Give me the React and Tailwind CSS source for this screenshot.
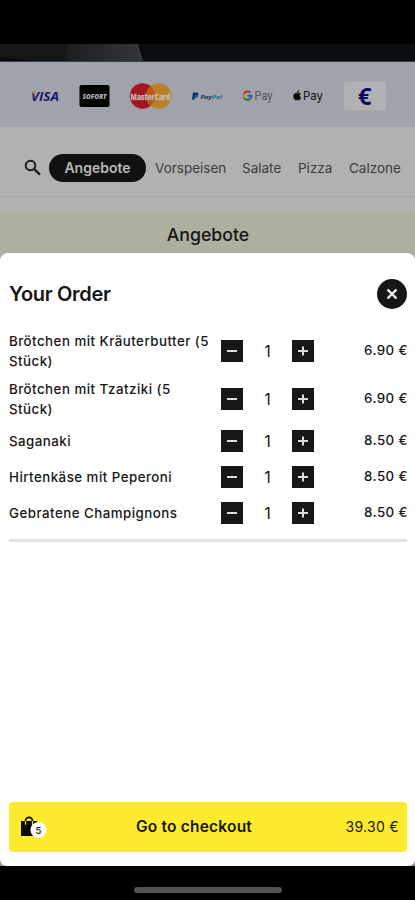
import React from 'react';

const items = [
  { name: 'Brötchen mit Kräuterbutter (5 Stück)', price: '6.90 €', height: 'h-12' },
  { name: 'Brötchen mit Tzatziki (5 Stück)', price: '6.90 €', height: 'h-12' },
  { name: 'Saganaki', price: '8.50 €', height: 'h-9' },
  { name: 'Hirtenkäse mit Peperoni', price: '8.50 €', height: 'h-9' },
  { name: 'Gebratene Champignons', price: '8.50 €', height: 'h-9' },
];

function HeroStrip() {
  return (
    <svg className="block h-[18px] w-full" viewBox="0 0 415 18" preserveAspectRatio="none">
      <defs>
        <linearGradient id="beam" x1="0" x2="1">
          <stop offset="0" stopColor="#1c1d1f" />
          <stop offset="1" stopColor="#34363a" />
        </linearGradient>
      </defs>
      <rect width="415" height="18" fill="#0a0d10" />
      <path d="M0 0H68L66 17H0Z" fill="#161718" />
      <path d="M0 13L35 17H0Z" fill="#090909" />
      <path d="M68 0H138L143 17H65Z" fill="url(#beam)" />
      <rect y="17" width="415" height="1" fill="#3b3d40" />
    </svg>
  );
}

function PaymentLogos() {
  return (
    <svg className="block h-[65px] w-full" viewBox="0 0 415 65" fontFamily="'Open Sans', sans-serif">
      <text x="31" y="39" fontSize="13" fontWeight="700" fontStyle="italic" fill="#17186f" textLength="28" lengthAdjust="spacingAndGlyphs">VISA</text>
      <path d="M31 29.700h3.500l1 4z" fill="#b17a2b" />
      <rect x="79.500" y="23" width="30" height="22" rx="2" fill="#020303" />
      <text x="82.500" y="36.500" fontSize="6.500" fontWeight="800" fontStyle="italic" fill="#b7b7b7" textLength="24" lengthAdjust="spacingAndGlyphs">SOFORT</text>
      <circle cx="142.500" cy="34" r="12.700" fill="#a3161f" />
      <circle cx="158.700" cy="34" r="12.700" fill="#b98125" />
      <path d="M150.600 24.200a12.700 12.700 0 0 1 0 19.600a12.700 12.700 0 0 1 0-19.600z" fill="#b2591f" />
      <text x="130.500" y="37.500" fontSize="9" fontWeight="700" fill="#c4bfbd" stroke="#c4bfbd" strokeWidth=".3" textLength="40" lengthAdjust="spacingAndGlyphs">MasterCard</text>
      <path d="M193 30.500h3.700q2.300.4 1.500 2.600q-.7 1.900-3 1.900l-.5 2.500h-2.700z" fill="#112d68" />
      <path d="M195 33h3.200q0 3.200-3.200 3.200l-.3 1.800h-1z" fill="#19699b" />
      <text x="200.500" y="36.500" fontSize="5.500" fontWeight="700" fontStyle="italic" fill="#172c62" textLength="11.500" lengthAdjust="spacingAndGlyphs">Pay</text>
      <text x="212" y="36.500" fontSize="5.500" fontWeight="700" fontStyle="italic" fill="#17709f" textLength="10" lengthAdjust="spacingAndGlyphs">Pal</text>
      <g fill="none" strokeWidth="2">
        <path d="M250.500 30.600A4.200 4.200 0 0 0 244 31.500" stroke="#a93229" />
        <path d="M244 31.500A4.200 4.200 0 0 0 244 36" stroke="#b18a1a" />
        <path d="M244 36A4.200 4.200 0 0 0 250.200 36.700" stroke="#257a3d" />
        <path d="M247.500 33.700H251.500Q251.500 35.600 250.200 36.700" stroke="#315da7" />
      </g>
      <text x="254.500" y="37.500" fontSize="13" fill="#55575b" fontFamily="Roboto, sans-serif" textLength="18" lengthAdjust="spacingAndGlyphs">Pay</text>
      <path d="M297.200 31.600q-1.400-.8-2.600.1q-1.600 1.300-.9 3.800q.8 2.600 2.100 2.600q.7-.3 1.400-.3t1.500.3q1.300-.1 2.200-2.500q-1.500-.9-1.400-2.200q.1-1.100 1-1.700q-1.400-1.100-3.300-.1zM297.100 30.800q0-1.700 1.800-2.400q.1 2-1.800 2.400z" fill="#09090a" stroke="#09090a" strokeWidth=".5" />
      <text x="303" y="38" fontSize="12" fill="#111214" fontFamily="Inter, sans-serif" textLength="20" lengthAdjust="spacingAndGlyphs">Pay</text>
      <rect x="344" y="19.500" width="42" height="29" rx="3" fill="#b0b1b3" />
      <text x="358" y="42.500" fontSize="23.500" fontWeight="700" fill="#0b075f" textLength="13.500" lengthAdjust="spacingAndGlyphs">€</text>
    </svg>
  );
}

function StepButton({ plus }) {
  return (
    <button className="flex size-[22px] items-center justify-center bg-[#171717]">
      <svg className="size-[22px]" viewBox="0 0 22 22" fill="none" stroke="#dcdcdc" strokeWidth="2">
        <path d="M6 11h10" />
        {plus && <path d="M11 6.500v9" />}
      </svg>
    </button>
  );
}

export default function App() {
  return (
    <div className="flex h-[900px] w-[415px] flex-col overflow-hidden bg-black font-['Inter','Liberation_Sans',sans-serif] text-[#161616]">
      <div className="h-11 shrink-0 bg-black" />
      <HeroStrip />
      <div className="h-[65px] shrink-0 bg-[#a0a3ab]">
        <PaymentLogos />
      </div>
      <nav className="flex h-[70px] shrink-0 items-center border-b border-[#a6a6a6] bg-[#b1b1b1] pt-3 pl-6 text-[13.5px] text-[#3c3c3c]">
        <svg className="size-[17px] shrink-0" viewBox="0 0 17 17" fill="none" stroke="#1b1b1b" strokeWidth="2">
          <circle cx="6.500" cy="6.500" r="4.800" />
          <path d="M10 10l6 5.700" strokeWidth="2.400" />
        </svg>
        <div className="ml-2 flex h-7 w-[97px] shrink-0 items-center justify-center rounded-full bg-[#111111] text-sm font-semibold text-[#b8b8b8]">
          Angebote
        </div>
        <span className="ml-[9px] w-[87px] shrink-0 pt-px">Vorspeisen</span>
        <span className="w-14 shrink-0 pt-px">Salate</span>
        <span className="w-[51px] shrink-0 pt-px">Pizza</span>
        <span className="pt-px">Calzone</span>
      </nav>
      <div className="h-[15px] shrink-0 bg-[#b1b1b1]" />
      <div className="flex h-[41px] shrink-0 justify-center bg-[#aeaf9f] pt-[9px] pl-px text-[17.700px] leading-7 font-medium">
        Angebote
      </div>
      <div className="h-[613px] shrink-0 bg-[linear-gradient(#aeaf9f_50%,#999999_50%)]">
        <section className="flex h-full flex-col rounded-t-[8px] rounded-b-[7px] bg-white pr-2 pl-[9px]">
          <header className="flex h-[73px] shrink-0 items-center justify-between pt-[9px]">
            <h1 className="text-xl font-semibold tracking-[-0.33px]">Your Order</h1>
            <button className="flex size-[30px] items-center justify-center rounded-full bg-[#171717]">
              <svg className="size-[30px]" viewBox="0 0 30 30" stroke="#f4f4f4" strokeWidth="2.400">
                <path d="M10.500 10.500l9 9M19.500 10.500l-9 9" />
              </svg>
            </button>
          </header>
          <ul className="pt-[0.5px]">
            {items.map((item) => (
              <li key={item.name} className={`flex items-center ${item.height}`}>
                <span className="w-[212px] shrink-0 pr-1.5 text-[13.3px] leading-5 font-medium tracking-[0.48px]">{item.name}</span>
                <StepButton />
                <span className="w-[49px] text-center text-base">1</span>
                <StepButton plus />
                <span className="-mr-px ml-auto pt-px text-[13.3px] font-medium tracking-[0.45px]">{item.price}</span>
              </li>
            ))}
          </ul>
          <div className="mt-[8.5px] h-[3px] shrink-0 bg-[#e3e3e3]" />
          <button className="mt-auto mb-[14.5px] grid h-[50px] shrink-0 grid-cols-[76px_1fr_104px] items-center rounded-[4px] bg-[#ffeb2d] px-2">
            <svg className="h-7 w-8" viewBox="0 0 32 28" fontFamily="Inter, sans-serif">
              <path d="M4 8H20V23H4Z" fill="#090909" />
              <path d="M8.500 10V7.800a3.500 3.500 0 0 1 7 0v2.200" fill="none" stroke="#090909" strokeWidth="1.700" />
              <path d="M8.500 8v3.800M15.500 8v3.800" stroke="#ffeb2d" strokeWidth="1.200" />
              <circle cx="21.500" cy="17" r="8" fill="#fff" />
              <text x="21.500" y="20.500" fontSize="9.500" fontWeight="500" textAnchor="middle" fill="#161616">5</text>
            </svg>
            <span className="pt-px text-[15.500px] font-semibold tracking-[0.2px]">Go to checkout</span>
            <span className="pt-px text-right text-sm tracking-[0.3px]">39.30 €</span>
          </button>
        </section>
      </div>
      <div className="flex h-[34px] justify-center pt-[21px]">
        <div className="h-[6px] w-[148px] rounded-full bg-[#555555]" />
      </div>
    </div>
  );
}
